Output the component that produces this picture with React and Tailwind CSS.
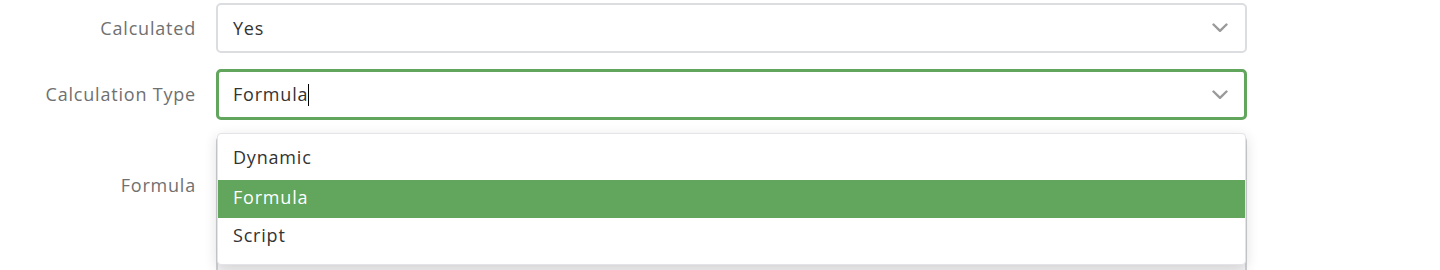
import { useState } from 'react'

function Chevron() {
  return (
    <svg width="16" height="10" viewBox="0 0 16 10" fill="none" className="shrink-0">
      <path d="M1.5 1.5 L8 7.8 L14.5 1.5" stroke="#9a9a9a" strokeWidth="2.4" strokeLinecap="round" strokeLinejoin="round" />
    </svg>
  )
}

const options = ['Dynamic', 'Formula', 'Script']

export default function App() {
  const [selected] = useState('Formula')

  return (
    <div className="h-[270px] overflow-hidden bg-white pt-[3px] font-['Open_Sans','Lato',sans-serif] text-[18px] tracking-[0.8px]">
      <div className="flex items-center gap-5">
        <label className="w-[196px] text-right text-[#707070]">Calculated</label>
        <div className="flex h-[50px] w-[1031px] items-center justify-between rounded-[5px] border-2 border-[#dcdde0] pl-[15px] pr-[17px] text-[#333]">
          <span className="mt-px">Yes</span>
          <Chevron />
        </div>
      </div>

      <div className="mt-4 flex items-center gap-5">
        <label className="w-[196px] text-right text-[#707070]">Calculation Type</label>
        <div className="relative w-[1031px]">
          <div className="flex h-[51px] items-center justify-between rounded-[5px] border-[3px] border-[#62a55c] pl-[14px] pr-[16px] text-[#333]">
            <span className="flex items-center">
              Formula
              <span className="inline-block h-[22px] w-px bg-black" />
            </span>
            <Chevron />
          </div>
          <ul className="absolute left-px right-px top-[64px] z-10 rounded-[4px] border border-[#e3e3e8] bg-white py-2 shadow-[0_4px_14px_rgba(0,0,0,0.14)]">
            {options.map((o) => (
              <li
                key={o}
                className={
                  o === selected
                    ? 'flex h-[38px] items-center bg-[#62a55c] px-[15px] text-white'
                    : 'flex h-[38px] items-center px-[15px] text-[#333]'
                }
              >
                <span className={o === 'Dynamic' ? '-mt-[7px]' : o === 'Script' ? '-mt-[4px]' : '-mt-[3px]'}>{o}</span>
              </li>
            ))}
          </ul>
        </div>
      </div>

      <div className="mt-4 flex items-start gap-5">
        <label className="w-[196px] pt-[36px] text-right text-[#707070]">Formula</label>
        <div className="h-[200px] w-[1031px] rounded-[5px] border-2 border-[#cfd0d4] bg-[#f3f3f5]" />
      </div>
    </div>
  )
}
